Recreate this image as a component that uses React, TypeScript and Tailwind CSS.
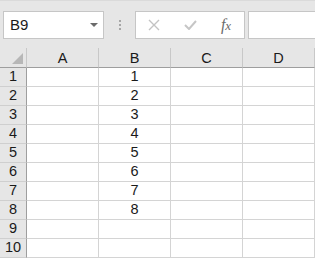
const cols = ['A', 'B', 'C', 'D']
const rows = [1, 2, 3, 4, 5, 6, 7, 8, 9, 10]
const values: Record<number, string> = { 1: '1', 2: '2', 3: '3', 4: '4', 5: '5', 6: '6', 7: '7', 8: '8' }

export default function App() {
  return (
    <div className="w-[315px] h-[258px] overflow-hidden bg-white text-[14.5px] text-[#1a1a1a]" style={{ fontFamily: '"Liberation Sans", "Noto Sans CJK SC", sans-serif' }}>
      {/* Formula bar */}
      <div className="h-[48px] bg-[#e6e6e6] border-t border-[#dadada] flex items-start pt-[10px] pl-[3px]">
        <div className="w-[101px] h-[28px] bg-white border border-[#c6c6c6] flex items-center justify-between pl-[6px] pr-[5px]">
          <span className="text-[15px]">B9</span>
          <svg width="8" height="4" viewBox="0 0 8 4"><path d="M0 0h8L4 4z" fill="#6b6b6b" /></svg>
        </div>
        <div className="w-[31px] h-[28px] flex flex-col items-center justify-center gap-[2px]">
          <span className="w-[2px] h-[2px] bg-[#a6a6a6]" />
          <span className="w-[2px] h-[2px] bg-[#a6a6a6]" />
          <span className="w-[2px] h-[2px] bg-[#a6a6a6]" />
        </div>
        <div className="w-[110px] h-[28px] bg-white border border-[#c6c6c6] flex items-center">
          <div className="w-[36px] flex justify-center">
            <svg width="12" height="12" viewBox="0 0 12 12"><path d="M1 1l10 10M11 1L1 11" stroke="#c3c3c3" strokeWidth="1.4" /></svg>
          </div>
          <div className="w-[36px] flex justify-center">
            <svg width="13" height="10" viewBox="0 0 13 10"><path d="M1 5l4 4 7-8" stroke="#c6c6c6" strokeWidth="2" fill="none" /></svg>
          </div>
          <div className="w-[36px] flex justify-center">
            <span className="italic text-[16px] leading-none text-[#6b6b6b]" style={{ fontFamily: '"Liberation Serif", serif' }}>f<span className="text-[13px]">x</span></span>
          </div>
        </div>
        <div className="ml-[3px] flex-1 h-[28px] bg-white border border-[#c6c6c6] border-r-0" />
      </div>

      {/* Sheet grid */}
      <div className="grid grid-cols-[27px_72px_72px_72px_72px]">
        <div className="h-[20px] bg-[#e6e6e6] border-b border-r border-b-[#9e9e9e] border-r-[#c8c8c8] flex items-end justify-end pr-[3px] pb-[3px]">
          <svg width="11" height="11" viewBox="0 0 11 11"><path d="M11 0v11H0z" fill="#b7b7b7" /></svg>
        </div>
        {cols.map(c => (
          <div key={c} className="h-[20px] bg-[#e6e6e6] border-b border-r border-b-[#9e9e9e] border-r-[#c8c8c8] flex items-center justify-center pt-[2px]">
            {c}
          </div>
        ))}
        {rows.map(r => (
          <div key={r} className="contents">
            <div className="h-[19px] bg-[#e6e6e6] border-b border-r border-b-[#cfcfcf] border-r-[#9e9e9e] flex items-center justify-center">
              {r}
            </div>
            {cols.map(c => (
              <div key={c} className="h-[19px] border-b border-r border-[#d4d4d4] flex items-center justify-center">
                {c === 'B' ? values[r] ?? '' : ''}
              </div>
            ))}
          </div>
        ))}
      </div>
    </div>
  )
}
